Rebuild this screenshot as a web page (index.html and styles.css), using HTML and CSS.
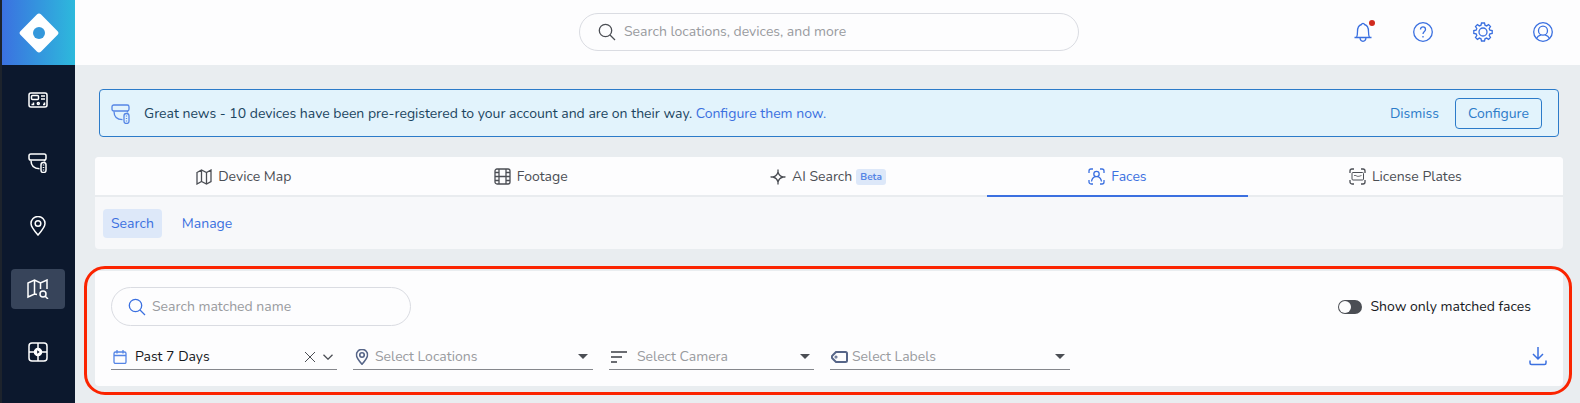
FILE: index.html
```html
<!DOCTYPE html>
<html lang="en">

<head>
    <meta charset="UTF-8">
    <meta name="viewport" content="width=device-width, initial-scale=1.0">
    <title>Faces - Search</title>
    <link rel="stylesheet" href="styles.css">
</head>

<body>

    <svg class="sprite" aria-hidden="true">
        <symbol id="camera" viewBox="0 0 20 20">
            <rect x="1" y="1" width="17" height="6" rx="1.8" />
            <path d="M3 7.5c0 5 2.6 8 8.5 8.2M16.5 7v1.5" />
            <rect x="13" y="9.5" width="5" height="10" rx="2.3" />
            <path d="M15.5 11.5v1M15.5 14v1M15.5 16.5v1" />
        </symbol>
        <symbol id="search" viewBox="0 0 18 18">
            <circle cx="7.5" cy="7.5" r="6.2" />
            <path d="M12 12l5 5" />
        </symbol>
        <symbol id="pin" viewBox="0 0 16 20">
            <path d="M8 19C4 14.5 1 11 1 7.5a7 7 0 0 1 14 0C15 11 12 14.5 8 19z" />
            <circle cx="8" cy="7.5" r="2.8" />
        </symbol>
        <symbol id="map" viewBox="0 0 16 16">
            <path d="M1 3.5L5.5 1l5 2.5L15 1v11.5L10.5 15l-5-2.5L1 15zM5.5 1v11.5M10.5 3.5V15" />
        </symbol>
    </svg>

    <aside class="sidebar">
        <a class="logo" href="#" aria-label="Home">
            <svg width="40" height="40" viewBox="0 0 40 40">
                <rect x="5.5" y="5.5" width="29" height="29" rx="3" transform="rotate(45 20 20)" fill="#fff" />
                <circle cx="20" cy="20" r="6" fill="#3498db" />
            </svg>
        </a>
        <nav class="side-nav" aria-label="Main">
            <a href="#" aria-label="Dashboard">
                <svg class="icon" width="20" height="16" viewBox="0 0 20 16">
                    <rect x="1" y="1" width="18" height="14" rx="2" />
                    <rect x="3.5" y="3.5" width="7" height="4" rx="1" />
                    <path d="M13 4h4M13 7h4M3.5 12.5h2v-2M15 12.5h1.5v-2" />
                    <circle cx="10.3" cy="11.5" r="1" />
                </svg>
            </a>
            <a href="#" aria-label="Devices"><svg class="icon" width="20" height="20"><use href="#camera" /></svg></a>
            <a href="#" aria-label="Locations"><svg class="icon" width="16" height="20"><use href="#pin" /></svg></a>
            <a href="#" class="active" aria-label="Investigate">
                <svg class="icon" width="22" height="20" viewBox="0 0 22 20">
                    <path d="M10 15.5L7.5 15 1 18V4l6.5-3 6 3L20 1v9M7.5 1v14M13.5 4v6" />
                    <circle cx="16" cy="15" r="3" />
                    <path d="M18.2 17.2L21 20" />
                </svg>
            </a>
            <a href="#" aria-label="Video wall">
                <svg class="icon" width="20" height="20" viewBox="0 0 20 20">
                    <rect x="1" y="1" width="18" height="18" rx="3" />
                    <path d="M10 1v5M10 14v5M1 10h5M14 10h5" />
                    <circle cx="10" cy="10" r="3.5" fill="#fff" />
                    <path d="M9.2 8.3v3.4l2.4-1.7z" fill="#0c182d" stroke="none" />
                </svg>
            </a>
        </nav>
    </aside>

    <div class="page">
        <header class="topbar">
            <label class="search-box global-search">
                <svg class="icon" width="18" height="18"><use href="#search" /></svg>
                <input type="search" placeholder="Search locations, devices, and more" aria-label="Search">
            </label>
            <div class="top-actions">
                <button type="button" class="bell" aria-label="Notifications">
                    <svg class="icon" width="20" height="20" viewBox="0 0 20 20">
                        <path d="M1.5 15.5h17M3.5 15.5c1-1.5 1-3.5 1-6 0-4 1.5-6.3 4-7 .3-1.5 2.7-1.5 3 0 2.5.7 4 3 4 7 0 2.5 0 4.5 1 6M7 15.5c.3 5 5.7 5 6 0" />
                    </svg>
                </button>
                <button type="button" aria-label="Help">
                    <svg class="icon" width="20" height="20" viewBox="0 0 20 20">
                        <circle cx="10" cy="10" r="9.3" />
                        <path d="M7.5 7.5c0-3.5 5-3.5 5 0 0 2-2.5 2-2.5 4.5M10 14v1.5" />
                    </svg>
                </button>
                <button type="button" aria-label="Settings">
                    <svg class="icon" width="20" height="20" viewBox="0 0 20 20">
                        <path d="M8.5 1h3l.5 2.2 1.6.7 2-1.3 1.9 1.9-1.3 2 .7 1.6 2.3.5v2.8l-2.3.5-.7 1.6 1.3 2-1.9 1.9-2-1.3-1.6.7-.5 2.2h-3L8 16.8l-1.6-.7-2 1.3-1.9-1.9 1.3-2-.7-1.6-2.3-.5V8.6l2.3-.5.7-1.6-1.3-2 1.9-1.9 2 1.3L8 3.2z" />
                        <circle cx="10" cy="10" r="4" />
                    </svg>
                </button>
                <button type="button" aria-label="Account">
                    <svg class="icon" width="20" height="20" viewBox="0 0 20 20">
                        <circle cx="10" cy="10" r="9.3" />
                        <circle cx="10" cy="8.7" r="4.5" />
                        <path d="M3.5 16.5c.8-2 2.5-3.2 4.5-3.7M16.5 16.5c-.8-2-2.5-3.2-4.5-3.7" />
                    </svg>
                </button>
            </div>
        </header>

        <main>
            <div class="banner">
                <svg class="icon" width="20" height="20"><use href="#camera" /></svg>
                <p>Great news - 10 devices have been pre-registered to your account and are on their way. <a href="#">Configure them now.</a></p>
                <button type="button" class="dismiss">Dismiss</button>
                <button type="button" class="configure">Configure</button>
            </div>

            <section class="tabs-card">
                <nav class="tabs" aria-label="Investigate">
                    <a href="#"><svg class="icon" width="16" height="16"><use href="#map" /></svg>Device Map</a>
                    <a href="#">
                        <svg class="icon" width="17" height="17" viewBox="0 0 17 17">
                            <rect x="1" y="1" width="15" height="15" rx="2" />
                            <path d="M5 1v15M12 1v15M5 8.5h7M1 4.5h4M1 8.5h4M1 12.5h4M12 4.5h4M12 8.5h4M12 12.5h4" />
                        </svg>
                        Footage
                    </a>
                    <a href="#">
                        <svg class="icon" width="16" height="16" viewBox="0 0 16 16">
                            <path d="M8 3c.8 3 2 4.2 5 5-3 .8-4.2 2-5 5-.8-3-2-4.2-5-5 3-.8 4.2-2 5-5zM8 .5V3M8 13v2.5M.5 8H3M13 8h2.5" />
                        </svg>
                        AI Search <span class="beta">Beta</span>
                    </a>
                    <a href="#" class="active">
                        <svg class="icon" width="17" height="17" viewBox="0 0 17 17">
                            <path d="M1 5V3a2 2 0 0 1 2-2h2M12 1h2a2 2 0 0 1 2 2v2M16 12v2a2 2 0 0 1-2 2h-2M5 16H3a2 2 0 0 1-2-2v-2" />
                            <circle cx="8.5" cy="6" r="2.7" />
                            <path d="M3.5 13.5c.5-3 2-4.5 3.8-4.9M13.5 13.5c-.5-3-2-4.5-3.8-4.9" />
                        </svg>
                        Faces
                    </a>
                    <a href="#">
                        <svg class="icon" width="17" height="17" viewBox="0 0 17 17">
                            <path d="M1 5V3a2 2 0 0 1 2-2h2M12 1h2a2 2 0 0 1 2 2v2M16 12v2a2 2 0 0 1-2 2h-2M5 16H3a2 2 0 0 1-2-2v-2" />
                            <rect x="3" y="4.5" width="11.5" height="7.5" rx="1" stroke-width="1" />
                            <path d="M5 7.5h2l1 .8h2l2.5-.8" stroke-width=".8" />
                        </svg>
                        License Plates
                    </a>
                </nav>
                <div class="sub-tabs">
                    <button type="button" class="active">Search</button>
                    <button type="button">Manage</button>
                </div>
            </section>

            <section class="filters">
                <div class="filter-row">
                    <label class="search-box name-search">
                        <svg class="icon" width="18" height="18"><use href="#search" /></svg>
                        <input type="search" placeholder="Search matched name" aria-label="Search matched name">
                    </label>
                    <label class="toggle">
                        <input type="checkbox">
                        Show only matched faces
                    </label>
                </div>
                <div class="filter-row">
                    <div class="fields">
                        <div class="field date">
                            <svg class="icon" width="14" height="14" viewBox="0 0 14 14">
                                <rect x="1" y="2" width="12" height="11.5" rx="1.5" />
                                <path d="M1 5.5h12M4 0v3.5M10 0v3.5" />
                            </svg>
                            <select aria-label="Date range">
                                <option>Past 7 Days</option>
                            </select>
                            <button type="button" aria-label="Clear">
                                <svg class="icon" width="10" height="10" viewBox="0 0 10 10"><path d="M0 0l10 10M10 0L0 10" /></svg>
                            </button>
                            <svg class="icon chevron" width="10" height="6" viewBox="0 0 10 6"><path d="M.5.8L5 5.2 9.5.8" /></svg>
                        </div>
                        <div class="field location">
                            <svg class="icon" width="14" height="16" viewBox="0 0 16 20"><use href="#pin" /></svg>
                            <select aria-label="Locations">
                                <option>Select Locations</option>
                            </select>
                        </div>
                        <div class="field model">
                            <svg class="icon" width="16" height="12" viewBox="0 0 16 12"><path d="M0 1h16M0 6h11M0 11h6" /></svg>
                            <select aria-label="Camera">
                                <option>Select Camera</option>
                            </select>
                        </div>
                        <div class="field labels">
                            <svg class="icon" width="17" height="12" viewBox="0 0 17 12">
                                <path d="M5 1h9.5a1.5 1.5 0 0 1 1.5 1.5v7a1.5 1.5 0 0 1-1.5 1.5H5L1.5 7.5a2 2 0 0 1 0-3z" />
                                <circle cx="5" cy="6" r=".5" />
                            </svg>
                            <select aria-label="Labels">
                                <option>Select Labels</option>
                            </select>
                        </div>
                    </div>
                    <button type="button" class="download" aria-label="Download">
                        <svg class="icon" width="18" height="20" viewBox="0 0 18 20">
                            <path d="M9 1v12M4 8l5 5 5-5M1 14.5V17a1.5 1.5 0 0 0 1.5 1.5h13A1.5 1.5 0 0 0 17 17v-2.5" />
                        </svg>
                    </button>
                </div>
            </section>
        </main>
    </div>

</body>

</html>
```
FILE: styles.css
```css
* {
    box-sizing: border-box;
}

body {
    font-family: Nunito, "Noto Sans", sans-serif;
    font-size: 14px;
    line-height: 20px;
    margin: 0;
    display: flex;
    min-height: 100vh;
    background: #e9edf0;
    color: #4b4e54;
}

a {
    color: #3b70e0;
    text-decoration: none;
}

button,
input,
select {
    font: inherit;
    color: inherit;
    background: none;
    border: 0;
    margin: 0;
    padding: 0;
    outline: 0;
}

.sprite {
    position: absolute;
    width: 0;
    height: 0;
}

.icon {
    flex: none;
    display: block;
    fill: none;
    stroke: currentColor;
    stroke-width: 1.3;
}

/* sidebar */
.sidebar {
    flex: none;
    width: 75px;
    background: #0c182d;
    border-left: 2px solid #1d232c;
}

.logo {
    display: flex;
    align-items: center;
    justify-content: center;
    height: 65px;
    background: linear-gradient(90deg, #3b71e0, #2db9dc);
}

.side-nav {
    display: flex;
    flex-direction: column;
    gap: 23px;
    padding: 15px 10px 0 9px;
}

.side-nav a {
    display: flex;
    align-items: center;
    justify-content: center;
    height: 40px;
    border-radius: 4px;
    color: #fff;
}

.side-nav .active {
    background: #37445a;
}

.side-nav .icon {
    stroke-width: 1.5;
}

/* top bar */
.page {
    flex: 1;
    min-width: 0;
}

.topbar {
    display: grid;
    grid-template-columns: 1fr 500px 1fr;
    align-items: center;
    height: 65px;
    padding: 0 25px 2px 28px;
    background: #fdfdfe;
}

.search-box {
    display: flex;
    align-items: center;
    gap: 8px;
    height: 38px;
    padding: 0 18px;
    border: 1px solid #dadce2;
    border-radius: 20px;
}

.search-box input {
    flex: 1;
    min-width: 0;
}

.search-box input::placeholder {
    color: #999b9f;
    opacity: 1;
}

.global-search {
    grid-column: 2;
}

.top-actions {
    display: flex;
    justify-content: flex-end;
    gap: 36px;
}

.top-actions button {
    position: relative;
    padding: 2px;
    color: #3b70e0;
}

.bell::after {
    content: "";
    position: absolute;
    top: 0;
    right: 0;
    width: 6px;
    height: 6px;
    border-radius: 50%;
    background: #d02a1e;
}

/* banner */
main {
    padding: 24px 17px 17px 20px;
}

.banner {
    display: flex;
    align-items: center;
    height: 48px;
    margin: 0 4px;
    padding: 1px 16px 0 11px;
    background: #e2f3fc;
    border: 1px solid #2c7bc9;
    border-radius: 4px;
    color: #1b4560;
}

.banner .icon {
    color: #5585e5;
}

.banner p {
    flex: 1;
    margin: 0 0 0 13px;
}

.banner button {
    color: #2c7bc9;
}

.banner .configure {
    height: 31px;
    margin-left: 16px;
    padding: 0 12px;
    border: 1px solid #2c7bc9;
    border-radius: 4px;
}

/* tabs */
.tabs-card {
    margin-top: 20px;
    background: #f7f8fa;
    border-radius: 4px;
    overflow: hidden;
}

.tabs {
    display: flex;
    background: #fdfdfe;
}

.tabs a {
    flex: 1 1 auto;
    display: flex;
    align-items: center;
    justify-content: center;
    gap: 6px;
    height: 40px;
    padding-top: 1px;
    border-bottom: 2px solid #e9ecef;
    color: #4b4e54;
}

.tabs .active {
    color: #3b70e0;
    border-color: #3b70e0;
}

.beta {
    margin-left: -2px;
    padding: 0 4px;
    font-size: 10px;
    font-weight: 700;
    line-height: 16px;
    background: #dde8f9;
    border-radius: 3px;
    color: #5585e5;
}

.sub-tabs {
    display: flex;
    gap: 12px;
    padding: 12px 8px 11px;
}

.sub-tabs button {
    height: 29px;
    padding: 0 8px;
    border-radius: 4px;
    color: #3b70e0;
}

.sub-tabs .active {
    background: #dde8f9;
}

/* filters */
.filters {
    position: relative;
    margin-top: 22px;
    padding: 16px;
    background: #fdfdfe;
    border-radius: 4px;
}

.filters::after {
    content: "";
    position: absolute;
    inset: -5px -9px -9px -11px;
    border: 3px solid #fb2400;
    border-radius: 21px;
    pointer-events: none;
}

.filter-row {
    display: flex;
    align-items: center;
    justify-content: space-between;
}

.name-search {
    width: 300px;
    height: 39px;
    margin-bottom: 16px;
    padding: 0 16px;
    gap: 6px;
}

.name-search .icon {
    color: #3b70e0;
}

.toggle {
    display: flex;
    align-items: center;
    gap: 8px;
    margin: 0 16px 16px 0;
    color: #16181c;
}

.toggle input {
    appearance: none;
    width: 24px;
    height: 14px;
    padding: 1px;
    border-radius: 7px;
    background: #4b4e54;
}

.toggle input::before {
    content: "";
    display: block;
    width: 12px;
    height: 12px;
    border-radius: 50%;
    background: #fdfdfe;
}

.toggle input:checked::before {
    margin-left: auto;
}

.fields {
    display: flex;
    gap: 16px;
}

.field {
    display: flex;
    align-items: center;
    gap: 8px;
    width: 240px;
    height: 28px;
    padding: 2px 5px 0 2px;
    border-bottom: 1px solid #85878c;
    color: #999b9f;
}

.field select {
    flex: 1;
    min-width: 0;
    appearance: none;
}

.field::after {
    content: "";
    border: 5px solid transparent;
    border-top-color: #4b4e54;
    border-bottom: 0;
}

.date {
    width: 226px;
    padding-right: 4px;
    color: #16181c;
}

.date::after {
    display: none;
}

.date > .icon:first-child {
    color: #5585e5;
}

.date button,
.date .chevron {
    color: #4b4e54;
}

.date button .icon {
    stroke-width: 1;
}

.location {
    gap: 6px;
}

.location .icon,
.labels .icon {
    color: #566588;
    stroke-width: 2;
}

.model {
    width: 205px;
    gap: 10px;
    padding-right: 4px;
}

.model .icon {
    color: #6b6d72;
    stroke-width: 2;
}

.labels {
    gap: 4px;
    padding-left: 1px;
}

.download {
    color: #3b70e0;
}

.download .icon {
    stroke-width: 1.5;
}
```
